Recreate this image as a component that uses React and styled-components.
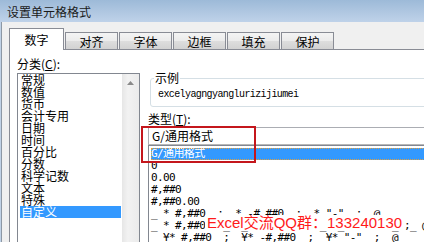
import React from "react";
import styled, { createGlobalStyle } from "styled-components";

const categories = [
  "常规",
  "数值",
  "货币",
  "会计专用",
  "日期",
  "时间",
  "百分比",
  "分数",
  "科学记数",
  "文本",
  "特殊",
  "自定义",
];

const formats = [
  "G/通用格式",
  "0",
  "0.00",
  "#,##0",
  "#,##0.00",
  '_ * #,##0_ ;_ * -#,##0_ ;_ * "-"_ ;_ @_ ',
  '_ * #,##0.00_ ;_ * -#,##0.00_ ;_ * "-"??_ ;_ @_ ',
  '_ ¥* #,##0_ ;_ ¥* -#,##0_ ;_ ¥* "-"_ ;_ @_ ',
];

const tabs = ["数字", "对齐", "字体", "边框", "填充", "保护"];

const GlobalStyle = createGlobalStyle`
  html, body {
    margin: 0;
    padding: 0;
    background: #f0f0f0;
    overflow: hidden;
  }
  body {
    font-family: "Noto Sans CJK SC", "Liberation Sans", sans-serif;
    font-size: 12px;
    color: #000;
  }
`;

const Window = styled.div`
  position: relative;
  width: 424px;
  height: 242px;
  overflow: hidden;
  display: flex;
  flex-direction: column;
`;

const TitleBar = styled.div`
  flex: none;
  height: 22px;
  padding-left: 7px;
  line-height: 23px;
  font-size: 12px;
  color: #1a1a1a;
  background: linear-gradient(#9dbad8, #bfd2e9);
`;

const Body = styled.div`
  flex: 1;
  min-height: 0;
  display: flex;
  flex-direction: column;
  padding: 6px 0 0 8px;
  background: #f0f0f0;
  border-left: 1px solid #c0d2e7;
  box-shadow: inset 1px 0 #8d98a5;
`;

const TabStrip = styled.div`
  flex: none;
  display: flex;
  align-items: flex-end;
  height: 21px;
  border-bottom: 1px solid #898c95;
`;

const Tab = styled.div`
  position: relative;
  box-sizing: border-box;
  width: ${(p) => (p.$active ? 55 : 53)}px;
  height: ${(p) => (p.$active ? 22 : 17)}px;
  margin-left: ${(p) => (p.$first ? 0 : 1)}px;
  margin-bottom: ${(p) => (p.$active ? -1 : 0)}px;
  border: 1px solid #898c95;
  border-bottom: none;
  text-align: center;
  line-height: ${(p) => (p.$active ? 21 : 17)}px;
  background: ${(p) =>
    p.$active
      ? "#fff"
      : "linear-gradient(#f4f4f4, #ebebeb 50%, #dedede 50%, #d2d2d2)"};
  z-index: ${(p) => (p.$active ? 1 : 0)};
`;

const Panel = styled.div`
  flex: 1;
  min-height: 0;
  display: flex;
  gap: 8px;
  padding-left: 7px;
  background: #fff;
  border-left: 1px solid #898c95;
`;

const LeftColumn = styled.div`
  flex: none;
  width: 123px;
  display: flex;
  flex-direction: column;
  padding-top: 6px;
`;

const FieldLabel = styled.div`
  line-height: 15px;
  margin: ${(p) => p.$margin || "0"};
  white-space: nowrap;
`;

const CategoryList = styled.div`
  flex: 1;
  display: flex;
  border: 1px solid #828790;
  border-bottom: none;
  padding-left: 2px;
`;

const Items = styled.div`
  flex: 1;
  display: flex;
  flex-direction: column;
`;

const CategoryItem = styled.div`
  height: 12px;
  line-height: 12px;
  padding-left: 1px;
  white-space: nowrap;
  color: ${(p) => (p.$selected ? "#fff" : "#000")};
  background: ${(p) => (p.$selected ? "#3399ff" : "transparent")};
`;

const ScrollTrack = styled.div`
  flex: none;
  width: 17px;
  margin-left: 1px;
  background: linear-gradient(90deg, #e6e6e6, #f2f2f2 35%, #ebebeb);
`;

const ArrowButton = styled.div`
  height: 17px;
  display: flex;
  align-items: center;
  justify-content: center;
`;

const RightColumn = styled.div`
  flex: none;
  width: 300px;
  display: flex;
  flex-direction: column;
  padding-top: 21px;
`;

const GroupBox = styled.fieldset`
  margin: 0 0 0 2px;
  padding: 4px 6px 5px 3px;
  min-width: 0;
  border: 1px solid #d5dfe5;
  border-radius: 3px;
`;

const Legend = styled.legend`
  padding: 0 1px;
  line-height: 14px;
`;

const ExampleText = styled.div`
  padding-left: 4px;
  font-family: "Liberation Mono", monospace;
  font-size: 10px;
  letter-spacing: -0.6px;
  line-height: 12px;
  white-space: nowrap;
`;

const TypeInput = styled.div`
  box-sizing: border-box;
  height: 18px;
  padding-left: 3px;
  line-height: 16px;
  border: 1px solid #abadb3;
  border-bottom-color: #b8b8b8;
  white-space: nowrap;
`;

const TypeList = styled.div`
  flex: 1;
  padding: 2px 0 0 2px;
  border: 1px solid #828790;
  border-bottom: none;
`;

const TypeItem = styled.div`
  height: 12px;
  line-height: 12px;
  font-family: "DejaVu Sans Mono", "Noto Sans CJK SC", monospace;
  font-size: 11px;
  letter-spacing: -0.6px;
  white-space: pre;
  color: ${(p) => (p.$selected ? "#fff" : "#000")};
  background: ${(p) => (p.$selected ? "#3399ff" : "transparent")};
  outline: ${(p) => (p.$selected ? "1px dotted #e0a040" : "none")};
  outline-offset: -1px;
`;

const Highlight = styled.div`
  position: absolute;
  left: 141px;
  top: 126px;
  width: 115px;
  height: 37px;
  box-sizing: border-box;
  border: 2px solid #c4161c;
  pointer-events: none;
`;

const Watermark = styled.div`
  position: absolute;
  left: 205px;
  top: 215px;
  padding: 0 2px;
  height: 15px;
  line-height: 15px;
  font-family: "Liberation Sans", "Noto Sans CJK SC", sans-serif;
  font-size: 15px;
  color: #ff1a1a;
  background: #fff;
  white-space: nowrap;
`;

const UpArrow = () => (
  <svg width="7" height="4" viewBox="0 0 7 4">
    <path d="M0 4 L3.5 0 L7 4 Z" fill="#8a8a8a" />
  </svg>
);

export default function App() {
  return (
    <>
      <GlobalStyle />
      <Window>
        <TitleBar>设置单元格格式</TitleBar>
        <Body>
          <TabStrip>
            {tabs.map((t, i) => (
              <Tab key={t} $active={i === 0} $first={i === 0}>
                {t}
              </Tab>
            ))}
          </TabStrip>
          <Panel>
            <LeftColumn>
              <FieldLabel $margin="0 0 2px 0">
                分类(<u>C</u>):
              </FieldLabel>
              <CategoryList>
                <Items>
                  {categories.map((c) => (
                    <CategoryItem key={c} $selected={c === "自定义"}>
                      {c}
                    </CategoryItem>
                  ))}
                </Items>
                <ScrollTrack>
                  <ArrowButton>
                    <UpArrow />
                  </ArrowButton>
                </ScrollTrack>
              </CategoryList>
            </LeftColumn>
            <RightColumn>
              <GroupBox>
                <Legend>示例</Legend>
                <ExampleText>excelyagngyanglurizijiumei</ExampleText>
              </GroupBox>
              <FieldLabel $margin="4px 0 1px 0">
                类型(<u>T</u>):
              </FieldLabel>
              <TypeInput>G/通用格式</TypeInput>
              <TypeList>
                {formats.map((f, i) => (
                  <TypeItem key={f} $selected={i === 0}>
                    {f}
                  </TypeItem>
                ))}
              </TypeList>
            </RightColumn>
          </Panel>
        </Body>
        <Highlight />
        <Watermark>Excel交流QQ群：133240130</Watermark>
      </Window>
    </>
  );
}
